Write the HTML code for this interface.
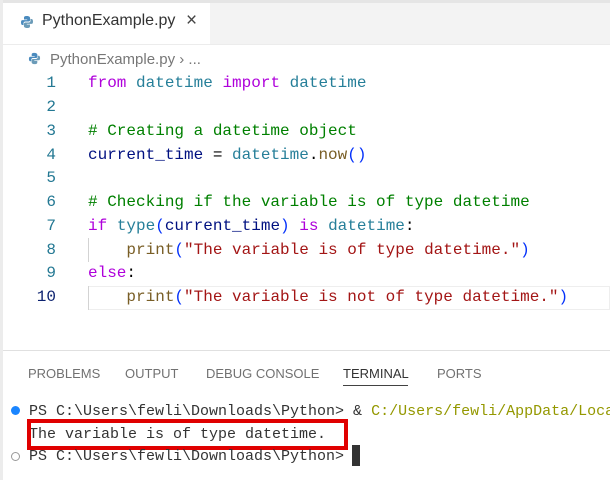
<!DOCTYPE html>
<html><head><style>
*{margin:0;padding:0;box-sizing:border-box}
body{width:610px;height:480px;background:#fff;position:relative;overflow:hidden;font-family:"Liberation Sans",sans-serif}
.abs{position:absolute;white-space:pre}
.code{font-family:"Liberation Mono",monospace;font-size:16px;line-height:24px}
.ln{position:absolute;width:56px;text-align:right;color:#237893;font-family:"Liberation Mono",monospace;font-size:16px;line-height:24px}
.k{color:#af00db}.t{color:#267f99}.c{color:#008000}.v{color:#001080}.f{color:#795e26}.s{color:#a31515}.p{color:#0431fa}
.term{font-family:"Liberation Mono",monospace;font-size:15px;line-height:22px;color:#333}
</style></head><body>
<div class="abs" style="left:0;top:0;width:610px;height:3px;background:#e5e5e5"></div>
<div class="abs" style="left:210px;top:3px;width:400px;height:42px;background:#f3f3f3"></div>
<div class="abs" style="left:0;top:44px;width:610px;height:1px;background:#ececec"></div>
<div class="abs" style="left:0;top:0;width:3px;height:480px;background:#ececec"></div>
<svg class="abs" style="left:20px;top:15px" width="14" height="14" viewBox="0 0 14 14"><path d="M7 1C4 1 4 2 4 3v1.5h3.2v.6H2.5C1.3 5.1 1 6 1 7.5S1.5 10 2.5 10H3.5V8.3c0-1 .8-1.8 1.8-1.8h3.3c.9 0 1.5-.7 1.5-1.5V3C10 1.8 8.8 1 7 1z" fill="#4b8bbe"/><path d="M7 13c3 0 3-1 3-2V9.5H6.8v-.6h4.7c1.2 0 1.5-.9 1.5-2.4S12.5 4 11.5 4h-1v1.7c0 1-.8 1.8-1.8 1.8H5.4c-.9 0-1.5.7-1.5 1.5V11C3.9 12.2 5.2 13 7 13z" fill="#6b9bb8"/></svg>
<div class="abs" style="left:42px;top:12px;font-size:16px;color:#333">PythonExample.py</div>
<div class="abs" style="left:186px;top:10px;font-size:19px;color:#444">×</div>
<svg class="abs" style="left:28px;top:52px" width="13" height="13" viewBox="0 0 14 14"><path d="M7 1C4 1 4 2 4 3v1.5h3.2v.6H2.5C1.3 5.1 1 6 1 7.5S1.5 10 2.5 10H3.5V8.3c0-1 .8-1.8 1.8-1.8h3.3c.9 0 1.5-.7 1.5-1.5V3C10 1.8 8.8 1 7 1z" fill="#4b8bbe"/><path d="M7 13c3 0 3-1 3-2V9.5H6.8v-.6h4.7c1.2 0 1.5-.9 1.5-2.4S12.5 4 11.5 4h-1v1.7c0 1-.8 1.8-1.8 1.8H5.4c-.9 0-1.5.7-1.5 1.5V11C3.9 12.2 5.2 13 7 13z" fill="#6b9bb8"/></svg>
<div class="abs" style="left:50px;top:51px;font-size:15px;color:#777">PythonExample.py › ...</div>

<div class="abs" style="left:88px;top:286px;width:522px;height:24px;border:1px solid #eee"></div>
<div class="abs" style="left:88px;top:238px;width:1px;height:24px;background:#d3d3d3"></div>
<div class="abs" style="left:88px;top:286px;width:1px;height:24px;background:#d3d3d3"></div>

<div class="ln" style="left:0;top:71px">1</div>
<div class="ln" style="left:0;top:95px">2</div>
<div class="ln" style="left:0;top:119px">3</div>
<div class="ln" style="left:0;top:143px">4</div>
<div class="ln" style="left:0;top:166px">5</div>
<div class="ln" style="left:0;top:190px">6</div>
<div class="ln" style="left:0;top:214px">7</div>
<div class="ln" style="left:0;top:238px">8</div>
<div class="ln" style="left:0;top:261px">9</div>
<div class="ln" style="left:0;top:285px;color:#0b216f">10</div>

<div class="abs code" style="left:88px;top:71px"><span class="k">from</span> <span class="t">datetime</span> <span class="k">import</span> <span class="t">datetime</span></div>
<div class="abs code c" style="left:88px;top:119px"># Creating a datetime object</div>
<div class="abs code" style="left:88px;top:143px"><span class="v">current_time</span> = <span class="t">datetime</span>.<span class="f">now</span><span class="p">()</span></div>
<div class="abs code c" style="left:88px;top:190px"># Checking if the variable is of type datetime</div>
<div class="abs code" style="left:88px;top:214px"><span class="k">if</span> <span class="t">type</span><span class="p">(</span><span class="v">current_time</span><span class="p">)</span> <span class="k">is</span> <span class="t">datetime</span>:</div>
<div class="abs code" style="left:88px;top:238px">    <span class="f">print</span><span class="p">(</span><span class="s">"The variable is of type datetime."</span><span class="p">)</span></div>
<div class="abs code" style="left:88px;top:261px"><span class="k">else</span>:</div>
<div class="abs code" style="left:88px;top:285px">    <span class="f">print</span><span class="p">(</span><span class="s">"The variable is not of type datetime."</span><span class="p">)</span></div>

<div class="abs" style="left:3px;top:350px;width:607px;height:1px;background:#e0e0e0"></div>
<div class="abs" style="left:28px;top:366px;font-size:13px;color:#717171">PROBLEMS</div>
<div class="abs" style="left:125px;top:366px;font-size:13px;color:#717171">OUTPUT</div>
<div class="abs" style="left:206px;top:366px;font-size:13px;color:#717171">DEBUG CONSOLE</div>
<div class="abs" style="left:343px;top:366px;font-size:13px;color:#333">TERMINAL</div>
<div class="abs" style="left:343px;top:385px;width:65px;height:1px;background:#424242"></div>
<div class="abs" style="left:437px;top:366px;font-size:13px;color:#717171">PORTS</div>

<div class="abs" style="left:11px;top:406px;width:9px;height:9px;border-radius:50%;background:#1a85ff"></div>
<div class="abs term" style="left:29px;top:401px">PS C:\Users\fewli\Downloads\Python&gt; &amp; <span style="color:#949800">C:/Users/fewli/AppData/Local</span></div>
<div class="abs term" style="left:29px;top:424px">The variable is of type datetime.</div>
<div class="abs" style="left:27px;top:419px;width:321px;height:31px;border:4px solid #e00000"></div>
<div class="abs" style="left:11px;top:452px;width:9px;height:9px;border-radius:50%;border:1px solid #999"></div>
<div class="abs term" style="left:29px;top:446px">PS C:\Users\fewli\Downloads\Python&gt;</div>
<div class="abs" style="left:352px;top:445px;width:8px;height:21px;background:#333"></div>
</body></html>
